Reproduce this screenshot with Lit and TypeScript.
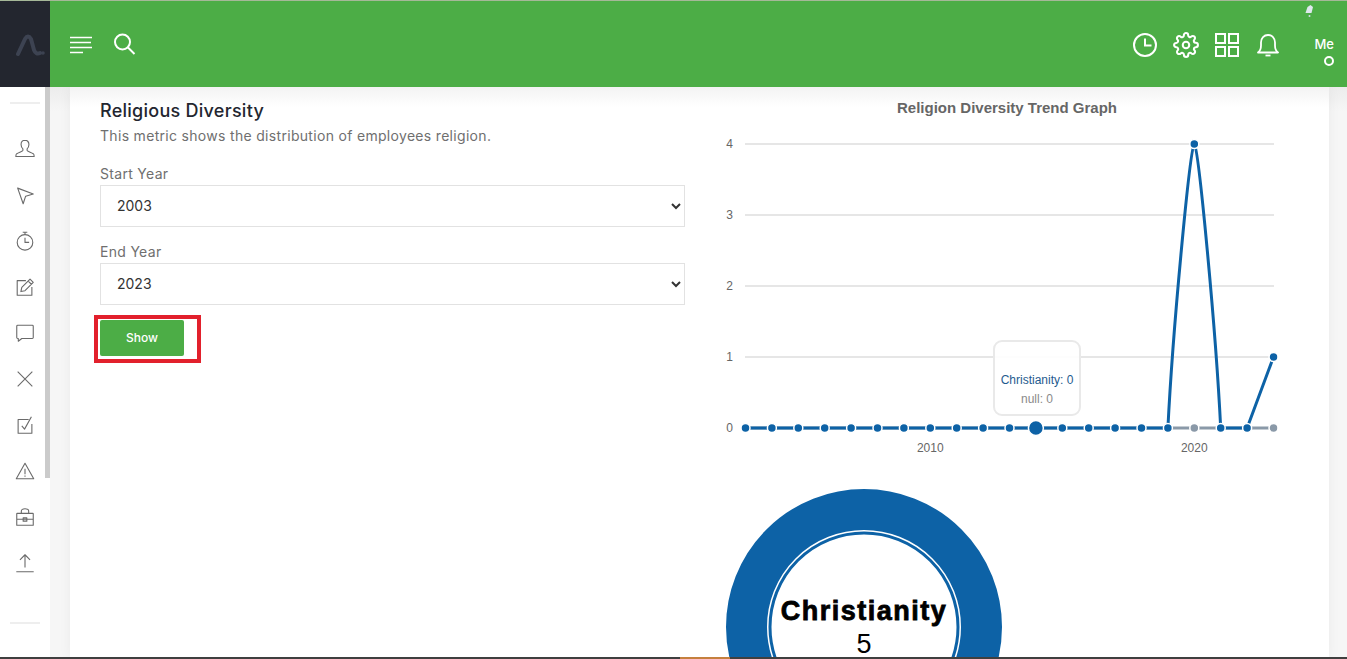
import { LitElement, html, css, svg } from "lit";
import { customElement } from "lit/decorators.js";

const years = Array.from({ length: 21 }, (_, i) => i);
const xAt = (i: number) => 745.5 + i * 26.4 - 720;
const yAt = (v: number) => 428 - v * 71 - 87;
const blue = [0,0,0,0,0,0,0,0,0,0,0,0,0,0,0,0,0,4,0,0,1];
const BLUE = "#0d62a6";
const GREY = "#8a99a8";

const sideIcons = [
  svg`<path d="M12 2.500c-2.700 0-4.300 2-4.300 4.700 0 2 .9 3.600 2 4.600v1.700c-.1 1-4.600 2.200-6.700 3.600-.8.600-1 1.600-1 3h20c0-1.400-.2-2.400-1-3-2.100-1.400-6.600-2.600-6.700-3.600v-1.700c1.100-1 2-2.600 2-4.600 0-2.700-1.600-4.700-4.300-4.700z"/>`,
  svg`<path d="M4 4.500 21 11l-8.300 2.300L10 21.500z"/>`,
  svg`<circle cx="12" cy="13.500" r="8.500"/><path d="M12 5V2.500M9.500 2.500h5M12 8.500v5h4.500"/>`,
  svg`<path d="M13 5H3.500v16h16v-9"/><path d="M7.500 17l1-4.500L17.500 3.500l3.500 3.500-9 9zM15.500 5.500l3.500 3.500"/>`,
  svg`<path d="M4 3.500h16a1 1 0 0 1 1 1V17a1 1 0 0 1-1 1H8.500l-3.800 3v-3H4a1 1 0 0 1-1-1V4.500a1 1 0 0 1 1-1z"/>`,
  svg`<path d="M4 4l16 16M20 4 4 20"/>`,
  svg`<path d="M16 6H4.500v15h15V11"/><path d="M8.500 13l3 3.500L19 3"/>`,
  svg`<path d="M12 3.500 21.500 20.500h-19zM12 9.500v6M12 17v1.300"/>`,
  svg`<path d="M3.500 8h17a.5.5 0 0 1 .5.500V21H3V8.500a.5.500 0 0 1 .5-.500zM3 14.500h18M8 8V5.500C8 4 9.500 3 12 3s4 1 4 2.500V8M10 13v3.500h4V13z"/>`,
  svg`<path d="M12 3v14M6.500 8.500 12 3l5.500 5.500M2.500 21.500h19"/>`,
];

function seriesPath() {
  let d = `M${xAt(0)} ${yAt(blue[0])}`;
  for (let i = 1; i < years.length; i++) {
    const x0 = xAt(i - 1), x1 = xAt(i), y0 = yAt(blue[i - 1]), y1 = yAt(blue[i]);
    if (y0 === y1 || (blue[i - 1] === 0 && blue[i] === 1)) d += `L${x1} ${y1}`;
    else if (blue[i] === 4) d += `C${x0 + 5} ${y0 - 100} ${x1 - 4.4} ${y1 + 5} ${x1} ${y1}`;
    else d += `C${x0 + 4.4} ${y0 + 5} ${x1 - 5} ${y1 - 100} ${x1} ${y1}`;
  }
  return d;
}

@customElement("app-root")
export class AppRoot extends LitElement {
  static styles = css`
    :host { display: block; height: 659px; overflow: hidden; font-family: "Inter", "Liberation Sans", sans-serif; background: #fff; }
    .page { height: 659px; display: flex; flex-direction: column; overflow: hidden; }
    .top { height: 87px; flex: none; display: flex; background: #4cad46; border-top: 1px solid #a5b898; box-sizing: border-box; position: relative; z-index: 2; }
    .logo { width: 50px; background: #23262f; display: flex; align-items: center; justify-content: center; }
    .logo svg { margin-left: 10px; }
    .bar { flex: 1; display: flex; align-items: flex-start; position: relative; }
    .ic { display: block; fill: none; stroke: #fff; }
    .menu { margin: 35px 0 0 20px; }
    .search { margin: 31px 0 0 21px; }
    .spacer { flex: 1; }
    .clock { margin: 31px 0 0 0; }
    .gear { margin: 31px 0 0 15px; }
    .grid { margin: 32px 0 0 16px; }
    .bell { margin: 32px 0 0 18px; }
    .me { margin: 35px 13px 0 33px; width: 22px; display: flex; flex-direction: column; align-items: flex-end; color: #fff; font-size: 13px; font-weight: 500; line-height: 16px; }
    .dot { width: 6px; height: 6px; margin-top: 4px; border: 2px solid #fff; border-radius: 50%; }
    .tinybell { position: absolute; right: 33px; top: 3px; }
    .body { flex: 1; display: flex; min-height: 0; }
    .side { width: 45px; flex: none; box-sizing: border-box; padding-left: 5px; background: #fff; display: flex; flex-direction: column; align-items: center; }
    .rule { width: 30px; height: 2px; background: #eee; flex: none; }
    .rule.a { margin-top: 15px; }
    .icons { display: flex; flex-direction: column; gap: 24px; margin: 34px 0 48px; }
    .icons svg { display: block; width: 22px; height: 22px; fill: none; stroke: #6a6a6a; stroke-width: 1.2; stroke-linejoin: round; }
    .track { width: 5px; flex: none; background: #fff; }
    .thumb { height: 391px; background: #cbcbcb; }
    .main { flex: 1; min-width: 0; background: linear-gradient(#ececec, #f6f6f6 24px); padding: 0 18px 0 20px; }
    .card { background: #fff; height: 100%; display: grid; grid-template-columns: 585px 1fr; column-gap: 35px; padding: 0 0 0 30px; box-shadow: 0 0 12px rgba(0,0,0,.05); background-image: linear-gradient(#f3f3f3, #fff 20px); }
    .left { padding-top: 12px; display: flex; flex-direction: column; align-items: stretch; }
    h2 { margin: 0; font-size: 18px; line-height: 24px; font-weight: 500; color: #23262f; letter-spacing: .26px; }
    .desc { margin: 2px 0 0; font-size: 14px; line-height: 21px; color: #6f6f6f; letter-spacing: .31px; }
    label { display: block; font-size: 14px; line-height: 20px; color: #6f6f6f; letter-spacing: .3px; }
    label.one { margin-top: 18px; }
    label.two { margin-top: 15px; }
    select { display: block; width: 100%; height: 42px; margin-top: 1px; box-sizing: border-box; padding: 0 12px 2px; font: 400 14px "Inter", "Liberation Sans", sans-serif; color: #333; background: #fff; border: 1px solid #e2e2e2; border-radius: 0; }
    .action { align-self: flex-start; margin: 10px 0 0 -6px; padding: 1px 13px 3px 2px; border: 4px solid #e2202c; }
    .show { display: block; width: 84px; height: 36px; padding: 0 0 2px; border: 0; border-radius: 2px; background: #4cad46; color: #fff; font: 500 12px "Inter", "Liberation Sans", sans-serif; }
    .right { display: flex; flex-direction: column; position: relative; min-height: 0; overflow: hidden; }
    .chart { display: block; flex: none; }
    .chart text, .donut text { font-family: "Liberation Sans", Arial, sans-serif; }
    .donut { display: block; flex: none; }
    .tip { position: absolute; left: 273px; top: 253px; width: 88px; height: 76px; box-sizing: border-box; border: 2px solid #e9e9e9; border-radius: 9px; background: rgba(255,255,255,.92); padding-top: 29px; text-align: center; font: 12px/19px "Liberation Sans", Arial, sans-serif; }
    .tip div:first-child { color: #1f5c8f; }
    .tip div:last-child { color: #8a8a8a; }
    .foot { height: 2px; flex: none; background: #3f3f3f; display: flex; }
    .foot i { display: block; width: 50px; margin-left: 680px; background: #c5803e; }
  `;

  private chart() {
    const grey = years.map((i) => `${xAt(i)},${yAt(0)}`).join(" ");
    return html`<svg class="chart" width="580" height="385" viewBox="0 0 580 385">
      <text x="287" y="26" text-anchor="middle" font-size="15" font-weight="700" fill="#666">Religion Diversity Trend Graph</text>
      ${[0,1,2,3,4].map((v) => svg`
        <line x1="25" x2="554" y1=${yAt(v)} y2=${yAt(v)} stroke="#e6e6e6" stroke-width="2"/>
        <text x="13" y=${yAt(v) + 4} text-anchor="end" font-size="12" fill="#666">${v}</text>`)}
      <text x=${xAt(7)} y="365" text-anchor="middle" font-size="12" fill="#666">2010</text>
      <text x=${xAt(17)} y="365" text-anchor="middle" font-size="12" fill="#666">2020</text>
      <polyline points=${grey} fill="none" stroke=${GREY} stroke-width="3"/>
      ${[17, 20].map((i) => svg`<circle cx=${xAt(i)} cy=${yAt(0)} r="4.500" fill=${GREY} stroke="#fff" stroke-width="1.500"/>`)}
      <path d=${seriesPath()} fill="none" stroke=${BLUE} stroke-width="3"/>
      ${years.map((i) => svg`<circle cx=${xAt(i)} cy=${yAt(blue[i])} r=${i === 11 ? 7.5 : 4.5} fill=${BLUE} stroke="#fff" stroke-width="1.500"/>`)}
    </svg>`;
  }

  private donut() {
    return html`<svg class="donut" width="580" height="200" viewBox="0 0 580 200">
      <circle cx="144" cy="155" r="117.500" fill="none" stroke=${BLUE} stroke-width="41"/>
      <circle cx="144" cy="155" r="94" fill="none" stroke=${BLUE} stroke-width="3"/>
      <text x="144" y="148" text-anchor="middle" font-size="27" font-weight="700" letter-spacing="1.500" stroke="#000" stroke-width=".8" fill="#000">Christianity</text>
      <text x="144" y="181" text-anchor="middle" font-size="27" fill="#000">5</text>
    </svg>`;
  }

  render() {
    return html`<div class="page">
      <header class="top">
        <div class="logo">
          <svg width="30" height="24" viewBox="0 0 30 24" fill="none" stroke="#3d4352" stroke-width="4" stroke-linecap="round" stroke-linejoin="round">
            <path d="M3 22 10 7Q13 2 16 7L19 18Q21 23 25 21"/>
            <circle cx="28" cy="21" r="1" fill="#3d4352" stroke-width="1.500"/>
          </svg>
        </div>
        <div class="bar">
          <svg class="ic menu" width="22" height="18" viewBox="0 0 22 18" stroke-width="1.500"><path d="M0 1.500h22M0 6.500h21M0 11.500h22M0 16.500h13"/></svg>
          <svg class="ic search" width="24" height="24" viewBox="0 0 24 24" stroke-width="2"><circle cx="9.500" cy="10" r="7.500"/><path d="M15 15.500 21.500 22"/></svg>
          <div class="spacer"></div>
          <svg class="ic clock" width="26" height="26" viewBox="0 0 26 26" stroke-width="2"><circle cx="13" cy="13" r="11"/><path d="M13 6.500V13.500h6.500"/></svg>
          <svg class="ic gear" width="26" height="26" viewBox="0 0 24 24" stroke-width="1.900" stroke-linejoin="round"><circle cx="12" cy="12" r="3"/><path d="M19.4 15a1.65 1.65 0 0 0 .33 1.82l.06.06a2 2 0 0 1 0 2.83 2 2 0 0 1-2.83 0l-.06-.06a1.65 1.65 0 0 0-1.82-.33 1.65 1.65 0 0 0-1 1.51V21a2 2 0 0 1-2 2 2 2 0 0 1-2-2v-.09A1.65 1.65 0 0 0 9 19.4a1.65 1.65 0 0 0-1.82.33l-.06.06a2 2 0 0 1-2.83 0 2 2 0 0 1 0-2.83l.06-.06a1.65 1.65 0 0 0 .33-1.82 1.65 1.65 0 0 0-1.51-1H3a2 2 0 0 1-2-2 2 2 0 0 1 2-2h.09A1.65 1.65 0 0 0 4.600 9a1.65 1.65 0 0 0-.33-1.82l-.06-.06a2 2 0 0 1 0-2.83 2 2 0 0 1 2.830 0l.06.06a1.65 1.65 0 0 0 1.820.33H9a1.65 1.65 0 0 0 1-1.510V3a2 2 0 0 1 2-2 2 2 0 0 1 2 2v.09a1.65 1.65 0 0 0 1 1.510 1.65 1.65 0 0 0 1.820-.33l.06-.06a2 2 0 0 1 2.830 0 2 2 0 0 1 0 2.830l-.06.06a1.65 1.65 0 0 0-.33 1.820V9a1.65 1.65 0 0 0 1.510 1H21a2 2 0 0 1 2 2 2 2 0 0 1-2 2h-.09a1.65 1.65 0 0 0-1.510 1z"/></svg>
          <svg class="ic grid" width="24" height="24" viewBox="0 0 24 24" stroke-width="2"><rect x="1" y="1" width="9" height="9"/><rect x="14" y="1" width="9" height="9"/><rect x="1" y="14" width="9" height="9"/><rect x="14" y="14" width="9" height="9"/></svg>
          <svg class="ic bell" width="22" height="24" viewBox="0 0 22 24" stroke-width="1.800" stroke-linejoin="round"><path d="M1 19.500c2-1.500 3-3.500 3-7V9.500C4 5 7 2 11 2s7 3 7 7.500v3c0 3.500 1 5.500 3 7z"/><path d="M8.500 22.500h5"/></svg>
          <div class="me"><span>Me</span><span class="dot"></span></div>
          <svg class="tinybell" width="10" height="14" viewBox="0 0 10 14"><path d="M1.500 9 3.500 3 6.500 1 9 3 7.500 9z" fill="#dfe8ee"/><circle cx="5.500" cy="12" r="1" fill="#cfdde6"/></svg>
        </div>
      </header>
      <div class="body">
        <nav class="side">
          <div class="rule a"></div>
          <div class="icons">${sideIcons.map((i) => html`<svg viewBox="0 0 24 24">${i}</svg>`)}</div>
          <div class="rule"></div>
        </nav>
        <div class="track"><div class="thumb"></div></div>
        <main class="main">
          <section class="card">
            <div class="left">
              <h2>Religious Diversity</h2>
              <p class="desc">This metric shows the distribution of employees religion.</p>
              <label class="one">Start Year</label>
              <select><option>2003</option></select>
              <label class="two">End Year</label>
              <select><option>2023</option></select>
              <div class="action"><button class="show">Show</button></div>
            </div>
            <div class="right">
              ${this.chart()}
              ${this.donut()}
              <div class="tip"><div>Christianity: 0</div><div>null: 0</div></div>
            </div>
          </section>
        </main>
      </div>
      <div class="foot"><i></i></div>
    </div>`;
  }
}
